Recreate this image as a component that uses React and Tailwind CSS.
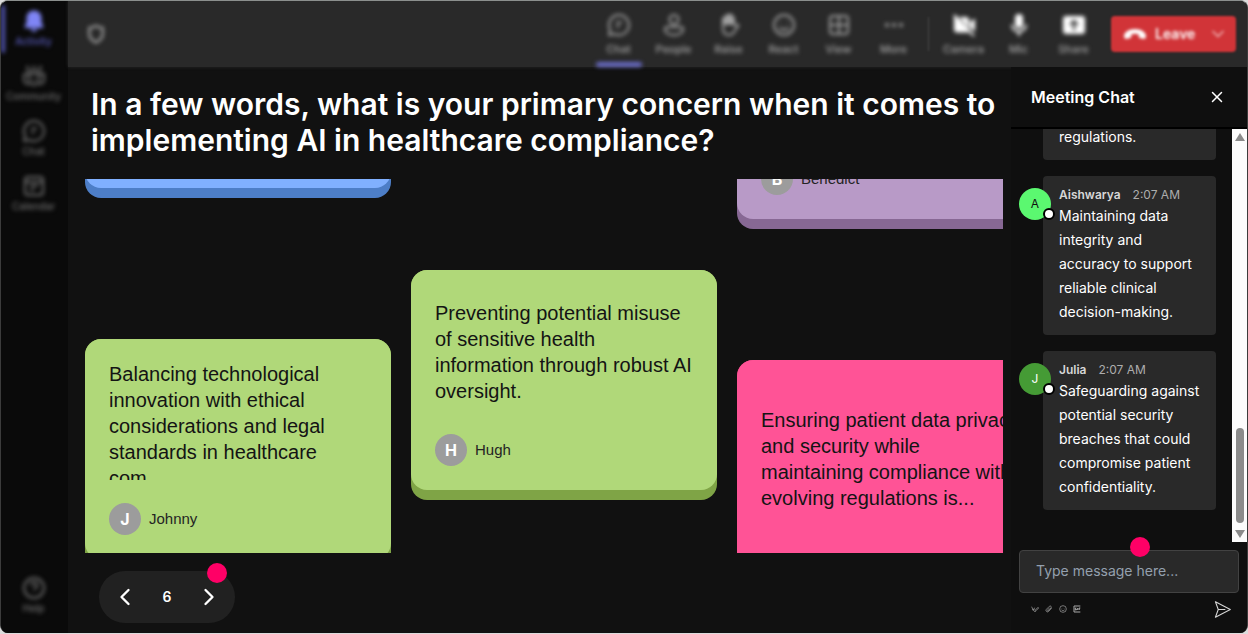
import React, { useState } from 'react';
import clsx from 'clsx';
import { ChevronLeft, ChevronRight, ChevronDown, X } from 'lucide-react';

const ICONS = {
    bell: <path fill="currentColor" stroke="none" d="M12 1.500c-4.400 0-7.500 3.300-7.500 7.500v4.500l-1.800 4v1.500h18.600v-1.500l-1.800-4V9c0-4.200-3.100-7.500-7.500-7.500zM8.500 20a3.600 3.600 0 0 0 7 0z" />,
    community: <path d="M4 3h3M10.500 3h3M17 3h3M4 6.500h16M2 10h20v6a4 4 0 0 1-4 4h-1M7 20H6a4 4 0 0 1-4-4v-6M7 10v6a5 5 0 0 0 10 0v-6M12 15v3" />,
    chat: <path d="M12 2a10 10 0 1 1-4.600 18.900L2 22l1.200-5.200A10 10 0 0 1 12 2zM9 9.500h6M9 13.500h3.500" />,
    calendar: <path d="M6 3h12a3 3 0 0 1 3 3v12a3 3 0 0 1-3 3H6a3 3 0 0 1-3-3V6a3 3 0 0 1 3-3zM3 8h18M8 12h8M8 16h4" />,
    help: <path d="M12 2a10 10 0 1 1 0 20 10 10 0 0 1 0-20zM9 9.500a3 3 0 1 1 4.300 2.700c-.9.500-1.300 1-1.300 2M12 17.200v.3" />,
    people: <path d="M12 2a4.500 4.500 0 1 1 0 9 4.500 4.500 0 0 1 0-9zM5 14h14a2 2 0 0 1 2 2c0 4-4 6-9 6s-9-2-9-6a2 2 0 0 1 2-2z" />,
    raise: (
        <>
            <path fill="currentColor" d="M6 11V6a1.500 1.500 0 0 1 3 0V3.500a1.500 1.500 0 0 1 3 0V3a1.500 1.500 0 0 1 3 0v2a1.500 1.500 0 0 1 2 0v6z" />
            <path d="M6 10v5c0 4.500 2.500 7 6 7 3 0 4.500-1.500 6-4.500l3.500-5c-1.500-1.500-3-.5-4 .8" />
        </>
    ),
    react: <path d="M12 2a10 10 0 1 1 0 20 10 10 0 0 1 0-20zM8.500 9v1M15.500 9v1M7.500 14.500c2.500 3 6.500 3 9 0" />,
    view: <path d="M6 3h12a3 3 0 0 1 3 3v12a3 3 0 0 1-3 3H6a3 3 0 0 1-3-3V6a3 3 0 0 1 3-3zM12 3v18M3 12h18" />,
    more: <path strokeWidth="4" strokeLinecap="round" d="M5 12h.01M12 12h.01M19 12h.01" />,
    camera: (
        <>
            <path fill="currentColor" stroke="none" d="M2 3l16 16.500H5a3 3 0 0 1-3-3zM7 4h7a3 3 0 0 1 3 3v8.500zM18 9l5-3.500v13L18 15z" />
            <path d="M2 2l20 21" />
        </>
    ),
    mic: (
        <>
            <rect x="8" y="1" width="8" height="14" rx="4" fill="currentColor" stroke="none" />
            <path d="M5 11.500a7 7 0 0 0 14 0M12 18.500V23" />
        </>
    ),
    share: <path fill="currentColor" fillRule="evenodd" stroke="none" d="M4 3h16a3 3 0 0 1 3 3v12a3 3 0 0 1-3 3H4a3 3 0 0 1-3-3V6a3 3 0 0 1 3-3zm8 3.500L7.300 11.200l1.400 1.400L11 10.300V17.500h2v-7.200l2.300 2.300 1.400-1.400z" />,
    hangup: <path fill="currentColor" stroke="none" d="M12 7C6.500 7 1 9.800 1 14c0 2.500 1.200 3.200 3 2.800l2.600-.6c1.200-.3 1.700-1 1.700-2.200v-1.600c2.400-.8 5-.8 7.400 0V14c0 1.200.5 1.900 1.700 2.200l2.600.6c1.800.4 3-.3 3-2.800 0-4.200-5.500-7-11-7z" />,
    shield: <path d="M12 2c2.500 1.800 5 2.500 8 2.500V12c0 5-3.500 8-8 10-4.500-2-8-5-8-10V4.500c3 0 5.500-.7 8-2.500z" />,
    format: <path d="M2 5l5 12 4-9M4 13h6M11 21l2-6 8-8 2 2-8 8z" />,
    attach: <path d="M20 9l-9 10a4.500 4.500 0 0 1-7-6L13 4a3.500 3.500 0 0 1 5 5l-8 9a1.500 1.500 0 0 1-3-2l7-8" />,
    gif: <path d="M3 3h19M3 21h19M3 3v18M10 9H7v6h3v-3M14 9v6M18 15V9h4M18 12h3" />,
    send: <path d="M2 1l21 11L2 23l4-11zM6 12h10" />,
};

function Icon({ name, className, strokeWidth = 2 }) {
    return (
        <svg viewBox="0 0 24 24" fill="none" stroke="currentColor" strokeWidth={strokeWidth} strokeLinejoin="round" className={className} aria-hidden="true">
            {ICONS[name]}
        </svg>
    );
}

const NAV = [
    { icon: 'bell', label: 'Activity', active: true },
    { icon: 'community', label: 'Community' },
    { icon: 'chat', label: 'Chat' },
    { icon: 'calendar', label: 'Calendar' },
];

const TOOLS = [
    { icon: 'chat', label: 'Chat', active: true },
    { icon: 'people', label: 'People' },
    { icon: 'raise', label: 'Raise' },
    { icon: 'react', label: 'React' },
    { icon: 'view', label: 'View' },
    { icon: 'more', label: 'More' },
];

const DEVICES = [
    { icon: 'camera', label: 'Camera' },
    { icon: 'mic', label: 'Mic' },
    { icon: 'share', label: 'Share' },
];

const MESSAGES = [
    { name: 'Aishwarya', time: '2:07 AM', color: 'bg-[#5bf870] text-[#111]', text: 'Maintaining data integrity and accuracy to support reliable clinical decision-making.' },
    { name: 'Julia', time: '2:07 AM', color: 'bg-[#459b35] text-white', text: 'Safeguarding against potential security breaches that could compromise patient confidentiality.' },
];

function NavItem({ icon, label, active }) {
    return (
        <button className={clsx('relative flex h-[55px] w-full flex-col items-center pt-2 pr-[2px] text-[10px] leading-4 font-medium', active ? 'text-[#7f85f5]' : 'text-[#6c6c6c]')}>
            {active && <span className="absolute top-1 left-0 h-12 w-1 rounded-full bg-[#5255b0]" />}
            <Icon name={icon} className="size-6" />
            <span className={clsx(active && 'text-[#5a5dc0]')}>{label}</span>
        </button>
    );
}

function ToolItem({ icon, label, active, bright }) {
    return (
        <button className={clsx('relative flex w-[55px] flex-col items-center gap-1 pt-3 text-[11px] leading-4 font-medium', bright ? 'text-white' : 'text-[#a0a0a0]')}>
            <Icon name={icon} className="size-6" />
            <span className="text-[#a4a4a4]">{label}</span>
            {active && <span className="absolute bottom-0 h-[5px] w-[46px] rounded-full bg-[#6a6cc8]" />}
        </button>
    );
}

function Card({ face, edge, text, author, className, textClass = 'h-[119px]' }) {
    return (
        <article className={clsx('shrink-0 rounded-2xl pb-[10px]', edge, className)}>
            <div className={clsx('rounded-2xl px-6 pt-[22px] pb-6', face)}>
                <div className={clsx('flex flex-col overflow-hidden', textClass)}>
                    <p className="my-auto text-[20px] leading-[26px] whitespace-pre-line text-[#141414]">{text}</p>
                </div>
                <div className="mt-[23px] flex h-8 items-center gap-2">
                    {author && (
                        <>
                            <span className="flex size-8 items-center justify-center rounded-full bg-[#9c9c9c] font-['Inter',sans-serif] text-base font-bold text-white">{author[0]}</span>
                            <span className="text-[15px] text-[#242424]">{author}</span>
                        </>
                    )}
                </div>
            </div>
        </article>
    );
}

function Message({ name, time, color, text }) {
    return (
        <div className="relative ml-6 rounded bg-[#292929] px-4 pt-[9px] pb-[11px]">
            <span className={clsx('absolute top-3 -left-6 flex size-8 items-center justify-center rounded-full text-xs', color)}>
                {name[0]}
                <span className="absolute -right-1 bottom-0 size-3 rounded-full border-2 border-black bg-white" />
            </span>
            <div className="flex gap-3 text-xs leading-[19px]">
                <span className="font-semibold text-[#d6d6d6]">{name}</span>
                <span className="text-[#adadad]">{time}</span>
            </div>
            <p className="text-sm leading-6 text-white">{text}</p>
        </div>
    );
}

function ChatPanel() {
    const [draft, setDraft] = useState('');

    return (
        <aside className="flex w-[236px] shrink-0 flex-col bg-[#0f0f0f]">
            <div className="flex h-[62px] shrink-0 items-center justify-between border-b-2 border-black pr-[21px] pl-5">
                <h2 className="text-base font-semibold text-white">Meeting Chat</h2>
                <button aria-label="Close chat" className="text-white">
                    <X className="size-[18px]" strokeWidth={2} />
                </button>
            </div>

            <div className="flex min-h-0 flex-1">
                <div className="flex min-w-0 flex-1 flex-col justify-end gap-4 overflow-hidden pr-4 pb-8 pl-2">
                    <div className="ml-6 rounded bg-[#292929] px-4 pt-[9px] pb-[11px]">
                        <p className="text-sm leading-6 text-white">regulations.</p>
                    </div>
                    {MESSAGES.map((m) => <Message key={m.name} {...m} />)}
                </div>
                {/* Scrollbar */}
                <div className="flex w-[15px] flex-col items-center bg-[#fcfcfc] py-1">
                    <svg viewBox="0 0 10 8" className="h-2 w-[10px]"><path d="M5 0l5 8H0z" fill="#8b8b8b" /></svg>
                    <div className="mt-auto mb-[7px] h-[95px] w-2 rounded-full bg-[#8b8b8b]" />
                    <svg viewBox="0 0 10 8" className="h-2 w-[10px]"><path d="M5 8l5-8H0z" fill="#8b8b8b" /></svg>
                </div>
            </div>

            <div className="pt-2 pr-2 pl-2">
                <div className="relative">
                    <input
                        aria-label="Message"
                        value={draft}
                        onChange={(e) => setDraft(e.target.value)}
                        placeholder="Type message here..."
                        className="block h-[43px] w-full rounded border border-[#424242] bg-[#292929] px-4 pb-[2px] text-sm text-white outline-none placeholder:text-[#94a0ae]"
                    />
                    <span className="absolute -top-[13px] left-[111px] size-5 rounded-full bg-[#ff0066]" />
                </div>
                <div className="flex h-10 items-center pb-2 pl-3 text-[#a8a8a8]">
                    <div className="flex gap-[6px]">
                        <button aria-label="Format"><Icon name="format" className="size-2" /></button>
                        <button aria-label="Attach"><Icon name="attach" className="size-2" /></button>
                        <button aria-label="Emoji"><Icon name="react" className="size-2" /></button>
                        <button aria-label="GIF"><Icon name="gif" className="size-2" strokeWidth={3} /></button>
                    </div>
                    <button aria-label="Send" className="mr-2 ml-auto text-[#d6d6d6]">
                        <Icon name="send" className="size-[17px]" strokeWidth={1.5} />
                    </button>
                </div>
            </div>
        </aside>
    );
}

function Board() {
    return (
        <div className="flex min-h-0 flex-1 gap-5 overflow-hidden">
            <div className="flex w-[306px] shrink-0 flex-col">
                <Card face="bg-[#80b0ff]" edge="bg-[#4d7ec7]" className="-mt-[211px]" />
                <Card
                    face="bg-[#b0d879]" edge="bg-[#7fa446]" className="mt-[141px]" author="Johnny"
                    text={'Balancing technological innovation with ethical considerations and legal standards in healthcare\ncom'}
                />
            </div>
            <div className="flex w-[306px] shrink-0 flex-col">
                <Card
                    face="bg-[#b0d879]" edge="bg-[#7fa446]" className="mt-[91px]" author="Hugh"
                    text="Preventing potential misuse of sensitive health information through robust AI oversight."
                />
            </div>
            <div className="flex w-[306px] shrink-0 flex-col">
                <Card face="bg-[#b89ac7]" edge="bg-[#876894]" className="-mt-[180px]" author="Benedict" />
                <Card
                    face="bg-[#ff5396]" edge="bg-[#c73a70]" className="mt-[131px]" textClass="h-[154px]"
                    text="Ensuring patient data privacy and security while maintaining compliance with evolving regulations is..."
                />
            </div>
        </div>
    );
}

function App() {
    const [page, setPage] = useState(6);

    return (
        <div className="h-screen bg-[#dcdcdc] pb-px font-['Inter',sans-serif]">
            <div className="flex h-full overflow-hidden rounded-lg border border-b-0 border-[#3c3c3c] border-t-[#8b8f8d] bg-[#111111]">
                <nav className="flex w-[67px] shrink-0 flex-col bg-[#0a0a0a] pb-[10px]">
                    <div className="flex flex-1 flex-col blur-[2px]">
                        {NAV.map((item) => <NavItem key={item.label} {...item} />)}
                        <div className="mt-auto"><NavItem icon="help" label="Help" /></div>
                    </div>
                </nav>

                <div className="flex min-w-0 flex-1 flex-col">
                    <header className="flex h-[66px] shrink-0 bg-[#292929] pr-[11px] shadow-[0_0_3px_#292929]">
                        <div className="flex flex-1">
                            <Icon name="shield" className="mt-[23px] ml-[18px] size-5 text-[#999] blur-[2px]" strokeWidth={3} />
                            <div className="ml-auto flex blur-[2px]">
                                {TOOLS.map((item) => <ToolItem key={item.label} {...item} />)}
                            </div>
                            <span className="mx-[7px] my-4 w-px bg-[#4a4a4a] blur-[1px]" />
                            <div className="flex blur-[2px]">
                                {DEVICES.map((item) => <ToolItem key={item.label} {...item} bright />)}
                            </div>
                            <div className="mt-[15px] ml-[10px] flex h-9 w-[125px] items-center rounded bg-[#d13438] pl-3 text-white blur-[1px]">
                                <button className="flex items-center gap-2 text-sm font-semibold blur-[1px]">
                                    <Icon name="hangup" className="size-6" />
                                    Leave
                                </button>
                                <button aria-label="Leave options" className="mr-2 ml-auto text-[#f0b5b6] blur-[1px]">
                                    <ChevronDown className="size-5" />
                                </button>
                            </div>
                        </div>
                    </header>

                    <div className="flex min-h-0 flex-1">
                        <main className="flex min-w-0 flex-1 flex-col pt-[19px] pr-2 pb-[10px] pl-[17px]">
                            <h1 className="px-[6px] text-[30px] leading-9 font-semibold text-white">
                                In a few words, what is your primary concern when it comes to implementing AI in healthcare compliance?
                            </h1>
                            <div className="mt-[21px] flex min-h-0 flex-1 flex-col font-['Liberation_Sans',Arial,sans-serif]">
                                <Board />
                            </div>
                            <div className="relative mt-[18px] ml-[14px] flex h-[52px] w-[136px] shrink-0 items-center justify-between rounded-full bg-[#212121] px-3 text-white">
                                <button aria-label="Previous page" onClick={() => setPage(page - 1)}>
                                    <ChevronLeft className="size-7" />
                                </button>
                                <span className="text-sm font-semibold">{page}</span>
                                <button aria-label="Next page" onClick={() => setPage(page + 1)}>
                                    <ChevronRight className="size-7" />
                                </button>
                                <span className="absolute -top-2 right-2 size-5 rounded-full bg-[#ff0066]" />
                            </div>
                        </main>
                        <ChatPanel />
                    </div>
                </div>
            </div>
        </div>
    );
}

export default App;
